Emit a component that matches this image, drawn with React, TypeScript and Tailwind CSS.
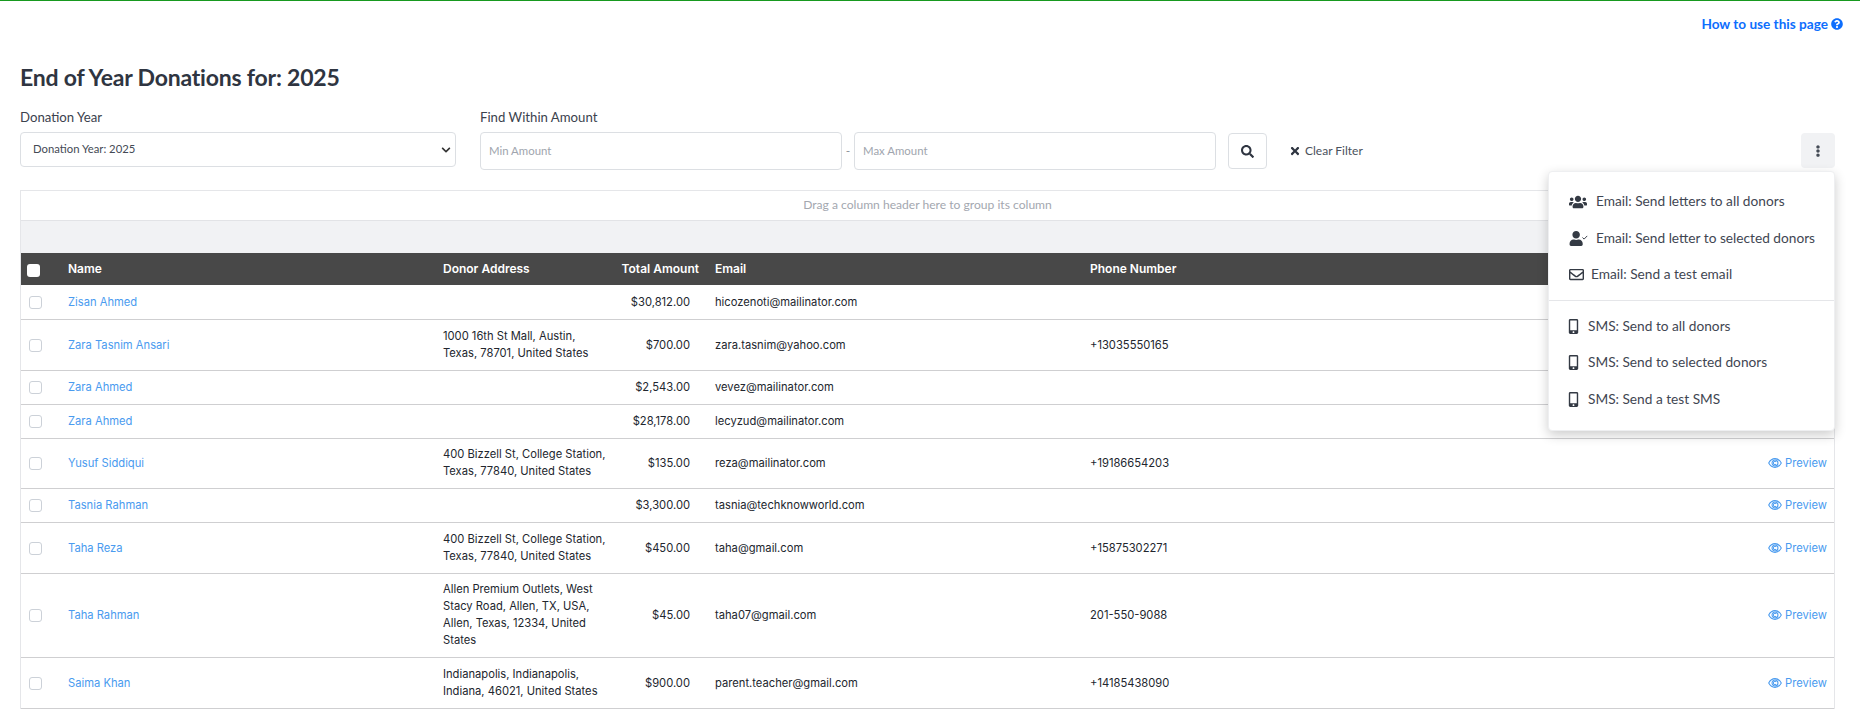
import React from "react";
import { FaUsers, FaRegEnvelope, FaMobileAlt, FaQuestionCircle, FaSearch, FaTimes, FaEllipsisV, FaUser, FaChevronDown } from "react-icons/fa";

const rows = [
  { name: "Zisan Ahmed", address: "", amount: "$30,812.00", email: "hicozenoti@mailinator.com", phone: "", h: "h-[34px]" },
  { name: "Zara Tasnim Ansari", address: "1000 16th St Mall, Austin, Texas, 78701, United States", amount: "$700.00", email: "zara.tasnim@yahoo.com", phone: "+13035550165", h: "h-[51px]" },
  { name: "Zara Ahmed", address: "", amount: "$2,543.00", email: "vevez@mailinator.com", phone: "", h: "h-[34px]" },
  { name: "Zara Ahmed", address: "", amount: "$28,178.00", email: "lecyzud@mailinator.com", phone: "", h: "h-[34px]" },
  { name: "Yusuf Siddiqui", address: "400 Bizzell St, College Station, Texas, 77840, United States", amount: "$135.00", email: "reza@mailinator.com", phone: "+19186654203", h: "h-[50px]" },
  { name: "Tasnia Rahman", address: "", amount: "$3,300.00", email: "tasnia@techknowworld.com", phone: "", h: "h-[34px]" },
  { name: "Taha Reza", address: "400 Bizzell St, College Station, Texas, 77840, United States", amount: "$450.00", email: "taha@gmail.com", phone: "+15875302271", h: "h-[51px]" },
  { name: "Taha Rahman", address: "Allen Premium Outlets, West Stacy Road, Allen, TX, USA, Allen, Texas, 12334, United States", amount: "$45.00", email: "taha07@gmail.com", phone: "201-550-9088", h: "h-[84px]" },
  { name: "Saima Khan", address: "Indianapolis, Indianapolis, Indiana, 46021, United States", amount: "$900.00", email: "parent.teacher@gmail.com", phone: "+14185438090", h: "h-[51px]" },
];

function EyeIcon() {
  return (
    <svg width="14" height="14" viewBox="0 0 16 16" fill="none" stroke="currentColor" strokeWidth="1.2">
      <path d="M0.8 8C2.5 4.8 5 3 8 3s5.500 1.800 7.200 5c-1.700 3.200-4.200 5-7.200 5S2.500 11.200.8 8z" />
      <circle cx="8" cy="8" r="3.4" />
      <path d="M9.6 6.700A2 2 0 1 0 9.400 9.400" />
    </svg>
  );
}

function UserCheckIcon() {
  return (
    <span className="flex items-center w-[19px] h-[16px] shrink-0">
      <FaUser className="text-[15px]" />
      <svg width="6" height="5" viewBox="0 0 6 5" fill="none" stroke="currentColor" strokeWidth="1" className="-ml-[1px] mb-[3px]">
        <path d="M0.500 2.500l1.700 1.700L5.500 0.800" />
      </svg>
    </span>
  );
}

function MenuItem({ icon, label, gap, h }: { icon: React.ReactNode; label: string; gap: string; h: string }) {
  return (
    <div className={`flex items-center pl-5 ${h} ${gap} text-[13.7px] text-[#3f4652] whitespace-nowrap`}>
      <span className="text-[#343a44] flex items-center">{icon}</span>
      <span>{label}</span>
    </div>
  );
}

export default function App() {
  return (
    <div className="h-[710px] overflow-hidden bg-white relative border-t-[1px] border-[#17991f] font-['Lato','Liberation_Sans',sans-serif] text-[#2f3541]">
      <div className="flex justify-end px-[17px] h-[59px] pt-[13px]">
        <a className="flex items-center gap-[3px] h-5 text-[13.6px] font-bold text-[#0d6efd]">
          How to use this page <FaQuestionCircle className="text-[12px]" />
        </a>
      </div>

      <div className="pl-5 pr-[25px]">
        <h1 className="text-[23px] tracking-[-0.2px] leading-[34px] h-[34px] font-bold text-[#2f3541]">End of Year Donations for: 2025</h1>

        <div className="flex mt-[9px] h-[87px]">
          <div className="w-[436px] shrink-0">
            <div className="text-[13.2px] leading-5 h-[29px] text-[#3b424e] pt-[4px]">Donation Year</div>
            <div className="w-[436px] h-[35px] border border-[#dcdfe3] rounded flex items-center justify-between pl-3 pr-1">
              <span className="text-[11.3px] text-[#444a55]">Donation Year: 2025</span>
              <FaChevronDown className="text-[10px] text-[#333]" />
            </div>
          </div>
          <div className="ml-[24px] shrink-0">
            <div className="text-[13.2px] leading-5 h-[29px] text-[#3b424e] pt-[4px]">Find Within Amount</div>
            <div className="flex items-center">
              <div className="w-[362px] h-[38px] border border-[#dcdfe3] rounded flex items-center pl-2 text-[11.4px] text-[#a0a5ae]">Min Amount</div>
              <span className="w-3 text-center text-[12px] text-[#8a8f98]">-</span>
              <div className="w-[362px] h-[38px] border border-[#dcdfe3] rounded flex items-center pl-2 text-[11.4px] text-[#a0a5ae]">Max Amount</div>
              <div className="ml-3 w-[39px] h-[36px] border border-[#dcdfe3] rounded flex items-center justify-center text-[#2f3541]">
                <FaSearch className="text-[13px]" />
              </div>
              <div className="ml-[22px] flex items-center gap-[4px] text-[12px] text-[#4a515c]">
                <FaTimes className="text-[12px] text-[#2f3541]" /> Clear Filter
              </div>
            </div>
          </div>
          <div className="ml-auto mt-[30px] w-[34px] h-[35px] rounded bg-[#f1f2f4] flex items-center justify-center text-[#444b55]">
            <FaEllipsisV className="text-[12px]" />
          </div>
        </div>

        <div className="border-x border-t border-[#e5e6e9]">
          <div className="h-[30px] border-b border-[#e2e3e6] flex items-center justify-center text-[12.1px] text-[#a3a7af]">
            Drag a column header here to group its column
          </div>
          <div className="h-[32px] bg-[#f1f2f4]" />
          <table className="w-full table-fixed border-collapse font-['Inter','Liberation_Sans',sans-serif] text-[11.2px] text-[#22262e]">
            <colgroup>
              <col className="w-[39px]" />
              <col className="w-[375px]" />
              <col className="w-[180px]" />
              <col className="w-[92px]" />
              <col className="w-[375px]" />
              <col />
              <col className="w-[90px]" />
            </colgroup>
            <thead>
              <tr className="h-[32px] bg-[#484848] text-white text-[12px] font-semibold">
                <th className="p-0 pl-[6px] text-left">
                  <span className="block w-[13px] h-[13px] rounded-[3px] bg-white mt-[2px]" />
                </th>
                <th className="px-2 font-semibold text-left">Name</th>
                <th className="px-2 font-semibold text-left">Donor Address</th>
                <th className="pr-2 pl-0 font-semibold text-right whitespace-nowrap">Total Amount</th>
                <th className="px-2 font-semibold text-left">Email</th>
                <th className="px-2 font-semibold text-left">Phone Number</th>
                <th />
              </tr>
            </thead>
            <tbody>
              {rows.map((r, i) => (
                <tr key={i} className={`${r.h} border-b border-[#cfcfd1]`}>
                  <td className="p-0 pl-[8px] pt-[1px]">
                    <span className="block w-[13px] h-[13px] rounded-[3px] border border-[#ccd1d8] bg-white" />
                  </td>
                  <td className="px-2 pt-[1px] text-[#4a9bef]">{r.name}</td>
                  <td className="pl-2 pr-[6px] leading-[17px]">{r.address}</td>
                  <td className="pr-[17px] pl-0 pt-[1px] text-right">{r.amount}</td>
                  <td className="px-2 pt-[1px]">{r.email}</td>
                  <td className="px-2 pt-[1px]">{r.phone}</td>
                  <td className="pr-[7px] pt-[1px] text-[#4a9bef]">
                    <span className="flex items-center justify-end gap-[3px]">
                      <EyeIcon /> Preview
                    </span>
                  </td>
                </tr>
              ))}
            </tbody>
          </table>
        </div>
      </div>

      <div className="absolute left-[1548px] top-[170px] w-[287px] h-[260px] bg-white rounded shadow-[0_4px_12px_rgba(0,0,0,0.2)] border border-[#eeeff1] pt-[11px]">
        <MenuItem h="h-[37px]" gap="gap-[9px]" label="Email: Send letters to all donors" icon={<FaUsers className="text-[18px]" />} />
        <MenuItem h="h-[37px]" gap="gap-[8px]" label="Email: Send letter to selected donors" icon={<UserCheckIcon />} />
        <MenuItem h="h-[35px]" gap="gap-[7px]" label="Email: Send a test email" icon={<FaRegEnvelope className="text-[15px]" />} />
        <div className="h-px bg-[#e5e6e9] mt-[8px] mb-[7px]" />
        <MenuItem h="h-[36px]" gap="gap-[7px]" label="SMS: Send to all donors" icon={<FaMobileAlt className="text-[15px] -ml-[3px]" />} />
        <MenuItem h="h-[37px]" gap="gap-[7px]" label="SMS: Send to selected donors" icon={<FaMobileAlt className="text-[15px] -ml-[3px]" />} />
        <MenuItem h="h-[36px]" gap="gap-[7px]" label="SMS: Send a test SMS" icon={<FaMobileAlt className="text-[15px] -ml-[3px]" />} />
      </div>
    </div>
  );
}
